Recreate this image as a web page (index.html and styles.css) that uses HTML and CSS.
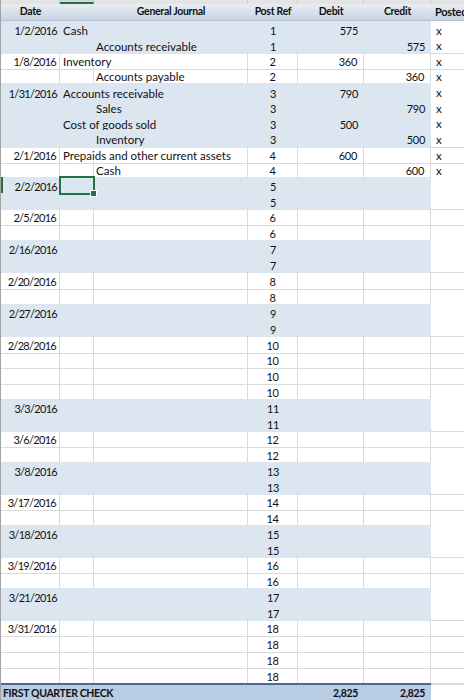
FILE: index.html
```html
<!DOCTYPE html>
<html>
<head>
<meta charset="utf-8">
<link rel="stylesheet" href="styles.css">
</head>
<body>
<div class="sheet">
  <div class="colhdrs">
    <div></div><div class="selcol"></div><div></div><div></div><div></div><div></div><div></div>
  </div>
  <div class="hdr">
    <div class="h">Date</div><div class="h"></div><div class="h">General Journal</div><div class="h">Post Ref</div><div class="h">Debit</div><div class="h">Credit</div><div class="h hp">Posted</div>
  </div>
  <div class="rows">
    <div class="row s"><div class="c dt">1/2/2016</div><div class="c dr">Cash</div><div class="c ref">1</div><div class="c num">575</div><div class="c num"></div><div class="c p">x</div></div>
    <div class="row s"><div class="c"></div><div class="c"></div><div class="c ac">Accounts receivable</div><div class="c ref">1</div><div class="c num"></div><div class="c num">575</div><div class="c p">x</div></div>
    <div class="row w"><div class="c dt">1/8/2016</div><div class="c dr">Inventory</div><div class="c ref">2</div><div class="c num">360</div><div class="c num"></div><div class="c p">x</div></div>
    <div class="row w"><div class="c"></div><div class="c"></div><div class="c ac">Accounts payable</div><div class="c ref">2</div><div class="c num"></div><div class="c num">360</div><div class="c p">x</div></div>
    <div class="row s"><div class="c dt">1/31/2016</div><div class="c dr">Accounts receivable</div><div class="c ref">3</div><div class="c num">790</div><div class="c num"></div><div class="c p">x</div></div>
    <div class="row s"><div class="c"></div><div class="c"></div><div class="c ac">Sales</div><div class="c ref">3</div><div class="c num"></div><div class="c num">790</div><div class="c p">x</div></div>
    <div class="row s"><div class="c"></div><div class="c dr">Cost of goods sold</div><div class="c ref">3</div><div class="c num">500</div><div class="c num"></div><div class="c p">x</div></div>
    <div class="row s"><div class="c"></div><div class="c"></div><div class="c ac">Inventory</div><div class="c ref">3</div><div class="c num"></div><div class="c num">500</div><div class="c p">x</div></div>
    <div class="row w"><div class="c dt">2/1/2016</div><div class="c dr">Prepaids and other current assets</div><div class="c ref">4</div><div class="c num">600</div><div class="c num"></div><div class="c p">x</div></div>
    <div class="row w"><div class="c"></div><div class="c"></div><div class="c ac">Cash</div><div class="c ref">4</div><div class="c num"></div><div class="c num">600</div><div class="c p">x</div></div>
    <div class="row s selrow"><div class="c dt">2/2/2016</div><div class="c sel"></div><div class="c"></div><div class="c ref">5</div><div class="c num"></div><div class="c num"></div><div class="c p"></div></div>
    <div class="row s"><div class="c"></div><div class="c"></div><div class="c"></div><div class="c ref">5</div><div class="c num"></div><div class="c num"></div><div class="c p"></div></div>
    <div class="row w"><div class="c dt">2/5/2016</div><div class="c"></div><div class="c"></div><div class="c ref">6</div><div class="c num"></div><div class="c num"></div><div class="c p"></div></div>
    <div class="row w"><div class="c"></div><div class="c"></div><div class="c"></div><div class="c ref">6</div><div class="c num"></div><div class="c num"></div><div class="c p"></div></div>
    <div class="row s"><div class="c dt">2/16/2016</div><div class="c"></div><div class="c"></div><div class="c ref">7</div><div class="c num"></div><div class="c num"></div><div class="c p"></div></div>
    <div class="row s"><div class="c"></div><div class="c"></div><div class="c"></div><div class="c ref">7</div><div class="c num"></div><div class="c num"></div><div class="c p"></div></div>
    <div class="row w"><div class="c dt">2/20/2016</div><div class="c"></div><div class="c"></div><div class="c ref">8</div><div class="c num"></div><div class="c num"></div><div class="c p"></div></div>
    <div class="row w"><div class="c"></div><div class="c"></div><div class="c"></div><div class="c ref">8</div><div class="c num"></div><div class="c num"></div><div class="c p"></div></div>
    <div class="row s"><div class="c dt">2/27/2016</div><div class="c"></div><div class="c"></div><div class="c ref">9</div><div class="c num"></div><div class="c num"></div><div class="c p"></div></div>
    <div class="row s"><div class="c"></div><div class="c"></div><div class="c"></div><div class="c ref">9</div><div class="c num"></div><div class="c num"></div><div class="c p"></div></div>
    <div class="row w"><div class="c dt">2/28/2016</div><div class="c"></div><div class="c"></div><div class="c ref">10</div><div class="c num"></div><div class="c num"></div><div class="c p"></div></div>
    <div class="row w"><div class="c"></div><div class="c"></div><div class="c"></div><div class="c ref">10</div><div class="c num"></div><div class="c num"></div><div class="c p"></div></div>
    <div class="row w"><div class="c"></div><div class="c"></div><div class="c"></div><div class="c ref">10</div><div class="c num"></div><div class="c num"></div><div class="c p"></div></div>
    <div class="row w"><div class="c"></div><div class="c"></div><div class="c"></div><div class="c ref">10</div><div class="c num"></div><div class="c num"></div><div class="c p"></div></div>
    <div class="row s"><div class="c dt">3/3/2016</div><div class="c"></div><div class="c"></div><div class="c ref">11</div><div class="c num"></div><div class="c num"></div><div class="c p"></div></div>
    <div class="row s"><div class="c"></div><div class="c"></div><div class="c"></div><div class="c ref">11</div><div class="c num"></div><div class="c num"></div><div class="c p"></div></div>
    <div class="row w"><div class="c dt">3/6/2016</div><div class="c"></div><div class="c"></div><div class="c ref">12</div><div class="c num"></div><div class="c num"></div><div class="c p"></div></div>
    <div class="row w"><div class="c"></div><div class="c"></div><div class="c"></div><div class="c ref">12</div><div class="c num"></div><div class="c num"></div><div class="c p"></div></div>
    <div class="row s"><div class="c dt">3/8/2016</div><div class="c"></div><div class="c"></div><div class="c ref">13</div><div class="c num"></div><div class="c num"></div><div class="c p"></div></div>
    <div class="row s"><div class="c"></div><div class="c"></div><div class="c"></div><div class="c ref">13</div><div class="c num"></div><div class="c num"></div><div class="c p"></div></div>
    <div class="row w"><div class="c dt">3/17/2016</div><div class="c"></div><div class="c"></div><div class="c ref">14</div><div class="c num"></div><div class="c num"></div><div class="c p"></div></div>
    <div class="row w"><div class="c"></div><div class="c"></div><div class="c"></div><div class="c ref">14</div><div class="c num"></div><div class="c num"></div><div class="c p"></div></div>
    <div class="row s"><div class="c dt">3/18/2016</div><div class="c"></div><div class="c"></div><div class="c ref">15</div><div class="c num"></div><div class="c num"></div><div class="c p"></div></div>
    <div class="row s"><div class="c"></div><div class="c"></div><div class="c"></div><div class="c ref">15</div><div class="c num"></div><div class="c num"></div><div class="c p"></div></div>
    <div class="row w"><div class="c dt">3/19/2016</div><div class="c"></div><div class="c"></div><div class="c ref">16</div><div class="c num"></div><div class="c num"></div><div class="c p"></div></div>
    <div class="row w"><div class="c"></div><div class="c"></div><div class="c"></div><div class="c ref">16</div><div class="c num"></div><div class="c num"></div><div class="c p"></div></div>
    <div class="row s"><div class="c dt">3/21/2016</div><div class="c"></div><div class="c"></div><div class="c ref">17</div><div class="c num"></div><div class="c num"></div><div class="c p"></div></div>
    <div class="row s"><div class="c"></div><div class="c"></div><div class="c"></div><div class="c ref">17</div><div class="c num"></div><div class="c num"></div><div class="c p"></div></div>
    <div class="row w"><div class="c dt">3/31/2016</div><div class="c"></div><div class="c"></div><div class="c ref">18</div><div class="c num"></div><div class="c num"></div><div class="c p"></div></div>
    <div class="row w"><div class="c"></div><div class="c"></div><div class="c"></div><div class="c ref">18</div><div class="c num"></div><div class="c num"></div><div class="c p"></div></div>
    <div class="row w"><div class="c"></div><div class="c"></div><div class="c"></div><div class="c ref">18</div><div class="c num"></div><div class="c num"></div><div class="c p"></div></div>
    <div class="row w"><div class="c"></div><div class="c"></div><div class="c"></div><div class="c ref">18</div><div class="c num"></div><div class="c num"></div><div class="c p"></div></div>
  </div>
  <div class="total">
    <div class="t tl">FIRST QUARTER CHECK</div><div class="t"></div><div class="t num">2,825</div><div class="t num">2,825</div><div class="tp"></div>
  </div>
</div>
</body>
</html>
```

FILE: styles.css
```css
* { box-sizing: border-box; }
body { margin: 0; background: #fff; }

.sheet {
  width: 464px;
  height: 700px;
  overflow: hidden;
  border-left: 1px solid #a3a3a3;
  font-family: Lato, "Liberation Sans", sans-serif;
  font-size: 11.5px;
  color: #111;
}

.colhdrs, .hdr, .row, .total {
  display: grid;
  grid-template-columns: 59px 34px 154px 50px 66px 67px 80px;
}

.colhdrs { height: 4px; background: #e4e4e4; }
.colhdrs > div { border-right: 1px solid #c9c9c9; }
.colhdrs > .selcol { background: #d6d6d6; border-bottom: 2px solid #217346; }

.hdr {
  height: 16.5px;
  background: linear-gradient(#e8edf4, #c9d4e2);
  border-bottom: 1px solid #b3c1d4;
}
.h {
  font-weight: 700;
  font-size: 10.5px;
  letter-spacing: -0.3px;
  display: flex;
  align-items: center;
  justify-content: center;
  white-space: nowrap;
  line-height: 15px;
}
.hp { justify-content: flex-start; padding-left: 4px; font-size: 11px; }

.rows {
  display: grid;
  grid-template-rows: repeat(12, 15.65px) repeat(8, 15.95px) repeat(22, 15.77px);
}

.c {
  display: flex;
  align-items: center;
  white-space: nowrap;
  line-height: 15px;
  padding-top: 2px;
  min-width: 0;
}
.w > .c { border-right: 1px solid #dadada; border-bottom: 1px solid #dadada; }
.s > .c { background: #dce6f1; }
.s > .p { background: #fff; border-bottom: 1px solid #dadada; }

.dt, .ref, .num { font-size: 11px; }
.dt { justify-content: flex-end; padding-right: 3px; letter-spacing: -0.7px; }
.ref, .num { letter-spacing: -0.3px; }
.dr { grid-column: span 2; padding-left: 3px; }
.ac { padding-left: 2px; }
.ref { justify-content: center; }
.num { justify-content: flex-end; padding-right: 6px; }
.p { padding-left: 5px; }

.sel {
  position: relative;
  outline: 2px solid #217346;
  outline-offset: -1px;
  z-index: 2;
}
.sel::after {
  content: "";
  position: absolute;
  right: -3px;
  bottom: -3px;
  width: 5px;
  height: 5px;
  background: #217346;
  border: 1px solid #fff;
}
.selrow > .c:first-child { box-shadow: inset 2px 0 0 #217346; }

.total {
  grid-template-columns: 247px 50px 66px 67px 80px;
  height: 20px;
}
.t {
  background: #b8cce4;
  border-top: 2px solid #4c6891;
  font-weight: 700;
  font-size: 10.5px;
  letter-spacing: -0.35px;
  display: flex;
  align-items: center;
  white-space: nowrap;
  line-height: 15px;
}
.tl { padding-left: 2px; }
.t.num { justify-content: flex-end; padding-right: 6px; }
.tp { border-top: 1px solid #dadada; }
```
